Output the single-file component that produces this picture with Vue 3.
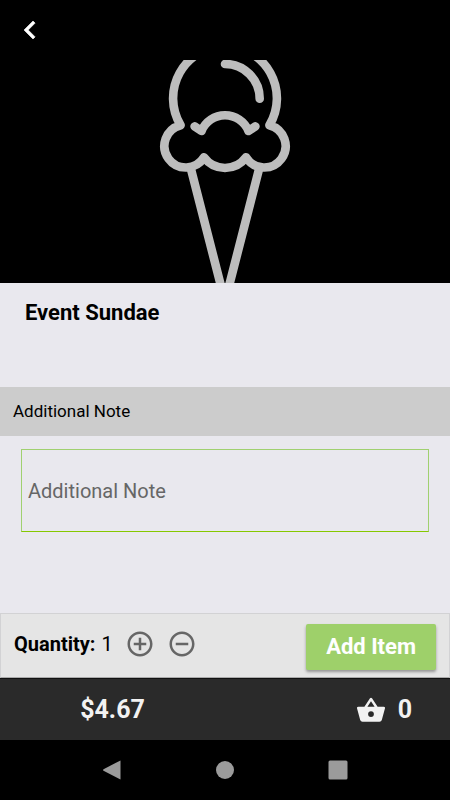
<script setup>
import { ref, computed } from "vue";

const price = 4.67;
const quantity = ref(1);
const note = ref("");
const cartCount = ref(0);

const total = computed(() => `$${(price * quantity.value).toFixed(2)}`);

const changeQuantity = (step) => {
	if (quantity.value + step < 1) return;
	quantity.value += step;
};

const addItem = () => {
	cartCount.value += quantity.value;
};
</script>

<template>
	<div class="page">
		<header class="hero">
			<button class="icon-button back" type="button" aria-label="Back">
				<svg viewBox="0 0 24 24" width="36" height="36">
					<path
						d="M15.41 7.41 14 6l-6 6 6 6 1.41-1.41L10.83 12z"
						fill="#fff"
						stroke="#fff"
						stroke-width=".4"
					/>
				</svg>
			</button>
			<svg class="cone" viewBox="150 60 150 223" width="150" height="223">
				<g
					fill="none"
					stroke="#bdbdbd"
					stroke-width="8.6"
					stroke-linecap="round"
					stroke-linejoin="round"
				>
					<!-- scoop -->
					<path
						d="M225 46A52.3 52.3 0 0 0 180.6 125.3A21.4 21.4 0 1 0 204 157.3A26 26 0 0 0 246 157.3A21.4 21.4 0 1 0 269.4 125.3A52.3 52.3 0 0 0 225 46"
					/>
					<path d="M225 64A34.7 34.7 0 0 1 259.7 98.7" />
					<path d="M194.6 126.4L201.5 131A25.4 25.4 0 0 1 248.5 131L255.4 126.4" />
					<!-- cone -->
					<path d="M191.2 170L222 290M258.8 170L228 290" />
				</g>
			</svg>
		</header>

		<main class="content">
			<h1 class="title">Event Sundae</h1>
			<label class="section" for="note">Additional Note</label>
			<div class="note">
				<input
					id="note"
					v-model="note"
					class="note-input"
					type="text"
					placeholder="Additional Note"
				/>
			</div>
		</main>

		<section class="order">
			<div class="picker">
				<div class="quantity">
					<strong>Quantity:</strong>
					<span>{{ quantity }}</span>
				</div>
				<div class="steps">
					<button
						class="icon-button"
						type="button"
						aria-label="Increase"
						@click="changeQuantity(1)"
					>
						<svg viewBox="0 0 24 24" width="30" height="30">
							<path
								d="M13 7h-2v4H7v2h4v4h2v-4h4v-2h-4V7zm-1-5C6.48 2 2 6.48 2 12s4.48 10 10 10 10-4.48 10-10S17.52 2 12 2zm0 18c-4.41 0-8-3.59-8-8s3.59-8 8-8 8 3.59 8 8-3.59 8-8 8z"
								fill="#666"
							/>
						</svg>
					</button>
					<button
						class="icon-button"
						type="button"
						aria-label="Decrease"
						@click="changeQuantity(-1)"
					>
						<svg viewBox="0 0 24 24" width="30" height="30">
							<path
								d="M7 11v2h10v-2H7zm5-9C6.48 2 2 6.48 2 12s4.48 10 10 10 10-4.48 10-10S17.52 2 12 2zm0 18c-4.41 0-8-3.59-8-8s3.59-8 8-8 8 3.59 8 8-3.59 8-8 8z"
								fill="#666"
							/>
						</svg>
					</button>
				</div>
			</div>
			<button class="add" type="button" @click="addItem">Add Item</button>
		</section>

		<footer class="summary">
			<div class="total">{{ total }}</div>
			<div class="cart">
				<svg viewBox="0 0 28 26" width="28" height="26">
					<path
						fill-rule="evenodd"
						d="M13 1.3Q14 0 15 1.3L20.6 9.7H26.6Q28.3 9.8 28 11.3L24.8 23Q24.3 24.8 22.5 24.8H5.5Q3.7 24.8 3.2 23L0 11.3Q-.3 9.8 1.4 9.7H7.4zM14 4.3L10.4 9.7H17.6zM14 14.2a2.9 2.9 0 1 0 0 5.8a2.9 2.9 0 1 0 0-5.8z"
						fill="#f2f2f2"
					/>
				</svg>
				<span>{{ cartCount }}</span>
			</div>
		</footer>

		<nav class="system">
			<button class="icon-button" type="button" aria-label="System back">
				<svg viewBox="0 0 20 20" width="20" height="20">
					<path d="M17.5 .4V19.6L.5 10.8Q-.3 10 .5 9.2z" fill="#9b9b9b" />
				</svg>
			</button>
			<button class="icon-button" type="button" aria-label="Home">
				<svg viewBox="0 0 20 20" width="20" height="20">
					<circle cx="10" cy="10" r="9" fill="#9b9b9b" />
				</svg>
			</button>
			<button class="icon-button" type="button" aria-label="Recent apps">
				<svg viewBox="0 0 20 20" width="20" height="20">
					<rect x=".5" y=".5" width="19" height="19" rx="1.5" fill="#9b9b9b" />
				</svg>
			</button>
		</nav>
	</div>
</template>

<style>
body {
	margin: 0;
	background: #000;
}
</style>

<style scoped>
.page {
	display: flex;
	flex-direction: column;
	min-height: 100vh;
	background: #e9e8ee;
	color: #000;
	font-family: Roboto, "Liberation Sans", sans-serif;
}
.icon-button {
	display: flex;
	justify-content: center;
	padding: 0;
	border: none;
	background: none;
	cursor: pointer;
}
.hero {
	display: flex;
	flex-direction: column;
	background: #000;
}
.back {
	align-self: flex-start;
	margin: 12px;
}
.cone {
	display: block;
	align-self: center;
}
.content {
	flex: 1;
	display: flex;
	flex-direction: column;
}
.title {
	margin: 0;
	padding: 16px 25px 60px;
	font-size: 22px;
	line-height: 28px;
	font-weight: 700;
}
.section {
	padding: 12px 13px;
	background: #ccc;
	font-size: 17px;
	line-height: 25px;
}
.note {
	display: flex;
	padding: 13px 21px;
}
.note-input {
	flex: 1;
	min-width: 0;
	height: 83px;
	box-sizing: border-box;
	padding: 0 6px;
	border: 1px solid #a0d070;
	border-bottom-color: #86c800;
	border-radius: 0;
	outline: none;
	background: transparent;
	color: #000;
	font-family: inherit;
	font-size: 20px;
}
.note-input::placeholder {
	color: #666;
	opacity: 1;
}
.order {
	display: flex;
	align-items: flex-start;
	padding: 10px 13px 7px;
	border: 1px solid #d2d2d4;
	border-bottom-color: #aaa;
	background: #e5e5e5;
}
.picker {
	display: flex;
	align-items: center;
	gap: 12px;
	padding-top: 5px;
}
.quantity {
	display: flex;
	gap: 6px;
	font-size: 20px;
	line-height: 24px;
}
.steps {
	display: flex;
	gap: 12px;
}
.add {
	margin-left: auto;
	padding: 0 20px 1px;
	height: 46px;
	border: none;
	border-radius: 2px;
	background: #9ed06a;
	box-shadow: 0 2px 3px rgba(0, 0, 0, 0.35);
	color: #fff;
	font-family: inherit;
	font-size: 22px;
	font-weight: 700;
	cursor: pointer;
}
.summary {
	display: grid;
	grid-template-columns: 1fr 1fr;
	align-items: center;
	height: 61px;
	border-top: 1px solid #111;
	background: #2a2a2a;
	color: #f2f2f2;
	font-size: 25px;
	line-height: 32px;
	font-weight: 700;
}
.total {
	text-align: center;
}
.cart {
	display: flex;
	align-items: center;
	justify-content: flex-end;
	gap: 13px;
	padding-right: 38px;
}
.system {
	display: flex;
	align-items: center;
	justify-content: center;
	height: 60px;
	background: #000;
}
.system .icon-button {
	width: 25%;
}
</style>
